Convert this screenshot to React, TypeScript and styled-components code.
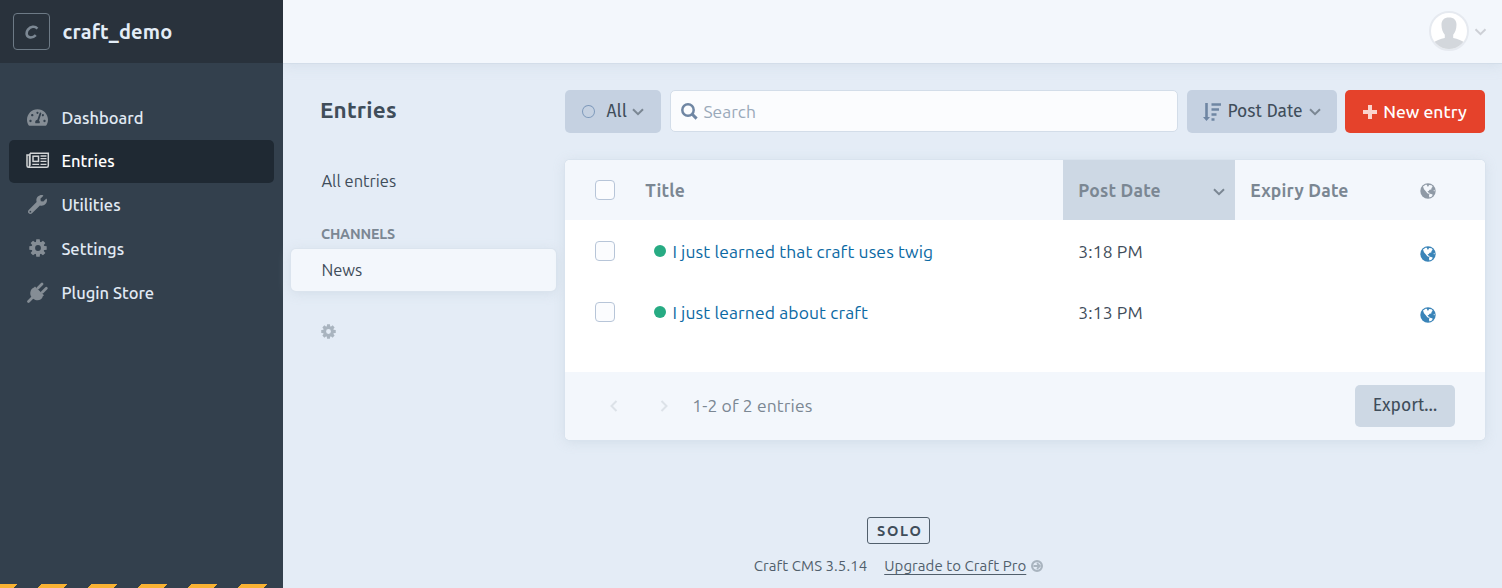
import React from "react";
import styled, { createGlobalStyle, css } from "styled-components";
import { FaTachometerAlt, FaWrench } from "react-icons/fa";

const Global = createGlobalStyle`
  *, *::before, *::after { box-sizing: border-box; }
  body {
    margin: 0;
    background: #e4ecf6;
    color: #3f4d5a;
    font-family: Ubuntu, "Noto Sans", sans-serif;
    font-size: 16.5px;
  }
  svg { display: block; flex: none; }
`;

const Page = styled.div`
  display: flex;
  height: 588px;
  overflow: hidden;
`;

/* ---------- global sidebar ---------- */

const Sidebar = styled.aside`
  display: flex;
  flex-direction: column;
  flex: none;
  width: 283px;
  background: #33404d;
`;

const SystemInfo = styled.div`
  display: flex;
  align-items: center;
  height: 63px;
  padding-left: 13px;
  gap: 12.5px;
  background: #29323c;
`;

const SiteIcon = styled.div`
  display: grid;
  place-items: center;
  width: 37px;
  height: 37px;
  border: 1px solid #6d7a86;
  border-radius: 4px;
`;

const SystemName = styled.h2`
  margin: 0;
  font-size: 20px;
  line-height: 28px;
  font-weight: 600;
  letter-spacing: 0.15px;
  color: #e3edf7;
`;

const Nav = styled.nav`
  display: flex;
  flex-direction: column;
  flex: 1;
  padding: 33px 9px 0;
`;

const NavItem = styled.a<{ $active?: boolean }>`
  display: flex;
  align-items: center;
  height: ${(p) => (p.$active ? 43 : 44)}px;
  padding-left: 16px;
  gap: 11.4px;
  border-radius: 5px;
  font-weight: 500;
  letter-spacing: 0.02px;
  color: ${(p) => (p.$active ? "#fff" : "#e1eaf4")};
  ${(p) =>
    p.$active &&
    css`
      padding-bottom: 1px;
      background: #1f2933;
    `}
`;

const NavIcon = styled.span<{ $active?: boolean }>`
  display: grid;
  place-items: center;
  width: 25px;
  padding-bottom: 2px;
  color: ${(p) => (p.$active ? "#d2d4d6" : "#858d95")};
`;

const DevModeStripe = styled.div`
  height: 4px;
  background: repeating-linear-gradient(
    135deg,
    #f9b233 0 12.2px,
    #33404d 12.2px 29px,
    #f9b233 29px 35.355px
  );
`;

/* ---------- main area ---------- */

const Main = styled.div`
  display: flex;
  flex-direction: column;
  flex: 1;
  min-width: 0;
`;

const TopBar = styled.header`
  display: flex;
  align-items: center;
  justify-content: flex-end;
  height: 63px;
  flex: none;
  padding: 0 15px 0 0;
  gap: 5px;
  background: #f3f7fc;
  color: #cdd0d6;
  box-shadow: 0 0 0 1px rgba(205, 216, 228, 0.6), 0 2px 12px rgba(205, 216, 228, 0.7);
  clip-path: inset(0 0 -40px 0);
`;

const Avatar = styled.div`
  width: 40px;
  height: 40px;
  margin-bottom: 1px;
  border: 2px solid #e6eaf0;
  border-radius: 50%;
  background: #fff;
  overflow: hidden;
`;

const Columns = styled.div`
  display: flex;
  flex: 1;
`;

const Sources = styled.div`
  display: flex;
  flex-direction: column;
  flex: none;
  width: 282px;
  padding: 27px 9px 0 8px;
`;

const PageTitle = styled.h1`
  margin: 0 0 30px 29px;
  font-size: 22.5px;
  line-height: 40px;
  font-weight: 700;
  letter-spacing: 0.2px;
  color: #3f4d5a;
`;

const Source = styled.a<{ $selected?: boolean }>`
  display: flex;
  align-items: center;
  height: 42px;
  padding-left: 30.4px;
  border-radius: 5px;
  color: #3f4d5a;
  ${(p) =>
    p.$selected &&
    css`
      background: #f3f7fc;
      box-shadow: 0 0 0 1px #dbe4ee, 0 2px 12px rgba(205, 216, 228, 0.8);
    `}
`;

const SourceHeading = styled.div`
  margin: 22px 0 5px 30px;
  font-size: 14.3px;
  line-height: 20px;
  font-weight: 700;
  letter-spacing: -0.2px;
  color: #7b8793;
`;

const SourceSettings = styled.div`
  margin: 32.500px 0 0 30px;
  color: #a9b4bf;
`;

const Content = styled.section`
  display: flex;
  flex-direction: column;
  flex: 1;
  min-width: 0;
  padding: 27px 17px 0 0;
`;

const Toolbar = styled.div`
  display: flex;
  align-items: flex-start;
  margin-bottom: 27px;
`;

const Button = styled.button<{ $kind?: "submit" | "footer"; $width: number }>`
  display: flex;
  align-items: center;
  justify-content: center;
  width: ${(p) => p.$width}px;
  height: 43px;
  padding: 0;
  border: 0;
  border-radius: 5px;
  background: #c5d1e1;
  color: #3f4d5a;
  font-family: "Fira Sans", "Noto Sans", sans-serif;
  font-size: 17.5px;
  font-weight: 400;
  ${(p) =>
    p.$kind === "submit" &&
    css`
      background: #e5422b;
      color: #fff;
      font-family: Ubuntu, "Noto Sans", sans-serif;
      font-weight: 500;
    `}
  ${(p) =>
    p.$kind === "footer" &&
    css`
      height: 42px;
      padding-bottom: 2px;
      background: #cdd8e4;
    `}
`;

const ButtonLabel = styled.span<{ $before: number; $after?: number; $raise?: number }>`
  margin: 0 ${(p) => p.$after ?? 0}px 0 ${(p) => p.$before}px;
  padding-bottom: ${(p) => p.$raise ?? 0}px;
`;

const Muted = styled.span`
  padding-top: 1px;
  color: #7b8793;
`;

const StatusRing = styled.span`
  width: 12.5px;
  height: 13px;
  border: 1px solid #7f9abb;
  border-radius: 50%;
`;

const SearchBox = styled.div`
  display: flex;
  align-items: center;
  flex: 1;
  height: 42px;
  margin: 0 9px;
  padding-left: 10px;
  gap: 5.400px;
  border: 1px solid #d3dde9;
  border-radius: 5px;
  background: #fbfcfe;
  color: #9aa9ba;
  font-size: 17.5px;
`;

const Spacer = styled.span`
  width: 8px;
`;

/* ---------- element index ---------- */

const Panel = styled.div`
  display: flex;
  flex-direction: column;
  height: 280px;
  border-radius: 5px;
  overflow: hidden;
  background: #fff;
  font-size: 17.5px;
  letter-spacing: 0.12px;
`;

const PanelShadow = styled.div`
  border-radius: 5px;
  box-shadow: 0 0 0 1px #d9e3ee, 0 2px 12px rgba(205, 216, 228, 0.8);
`;

const gridColumns = css`
  display: grid;
  grid-template-columns: 65px 433px 172px 170px 80px;
  align-items: center;
`;

const HeadRow = styled.div`
  ${gridColumns}
  height: 60px;
  background: #f3f7fc;
  font-weight: 700;
  letter-spacing: 0.18px;
  color: #7b8793;
`;

const Row = styled.div`
  ${gridColumns}
  height: 61px;
  padding-top: 1px;
`;

const Cell = styled.div<{ $sorted?: boolean }>`
  display: flex;
  align-items: center;
  height: 100%;
  padding-left: 15.300px;
  ${(p) =>
    p.$sorted &&
    css`
      justify-content: space-between;
      padding-right: 10px;
      background: #cdd8e4;
    `}
`;

const SortMark = styled.span`
  padding-top: 4px;
`;

const CheckCell = styled.div`
  padding-left: 30px;
`;

const Checkbox = styled.div`
  width: 20px;
  height: 20px;
  border: 1px solid #b7c5d8;
  border-radius: 4px;
  background: #fbfcfe;
`;

const StatusDot = styled.span`
  width: 12px;
  height: 12px;
  margin: 0 6.400px 0 8.700px;
  border-radius: 50%;
  background: #27ab83;
`;

const EntryLink = styled.a`
  color: #0b69a3;
`;

const GlobeCell = styled.div<{ $head?: boolean }>`
  padding: ${(p) => (p.$head ? 2 : 5)}px 0 0 15px;
  color: ${(p) => (p.$head ? "#8f9aa6" : "#3a84b8")};
`;

const PanelFooter = styled.div`
  display: flex;
  align-items: center;
  height: 68px;
  margin-top: auto;
  padding: 0 30px 0 45px;
  background: #f3f7fc;
  color: #7b8793;
`;

const Pager = styled.div`
  display: flex;
  gap: 42px;
  margin-right: 24.300px;
  color: #dce2e8;
`;

const Count = styled.span`
  flex: 1;
  padding-bottom: 1px;
`;

/* ---------- footer ---------- */

const AppFooter = styled.footer`
  display: flex;
  flex-direction: column;
  align-items: center;
  width: 667px;
  margin-top: 77px;
  font-size: 15px;
  letter-spacing: 0.07px;
  color: #515f6c;
`;

const Edition = styled.div`
  width: 63px;
  height: 27px;
  border: 1px solid #515f6c;
  border-radius: 3px;
  padding-left: 9px;
  font-size: 14.5px;
  line-height: 26px;
  font-weight: 700;
  letter-spacing: 1.7px;
  color: #3f4d5a;
`;

const Version = styled.div`
  display: flex;
  align-items: center;
  margin-top: 12px;
  line-height: 20px;
`;

const Upgrade = styled.a`
  margin: 0 5px 0 17px;
  text-decoration: underline;
  text-decoration-thickness: 1px;
  text-underline-offset: 3px;
`;

/* ---------- icons ---------- */

const CraftMark = () => (
  <svg width="14" height="14" viewBox="0 0 14 14" fill="none" stroke="#7c8894" strokeWidth="2.6">
    <path d="M12.4 3.6C9.8.6 5.4 1.400 3 4.600.6 8 1.500 12 5 12.400c2.200.300 4.300-.700 5.800-2.200" />
  </svg>
);

const Cog = ({ size }: { size: number }) => (
  <svg width={size} height={size} viewBox="0 0 18 18" fill="currentColor">
    {[0, 45, 90, 135].map((a) => (
      <g key={a} transform={`rotate(${a} 9 9)`}>
        <path d="M7.300.3h3.400l.5 4H6.800zM7.300 17.700h3.400l.5-4H6.800z" />
      </g>
    ))}
    <circle cx="9" cy="9" r="4.700" fill="none" stroke="currentColor" strokeWidth="3.600" />
  </svg>
);

const Newspaper = () => (
  <svg width="24" height="17" viewBox="0 0 24 17" fill="none" stroke="currentColor">
    <path strokeWidth="1.500" d="M4 1.250h18.300v12.500q0 1.500-1.500 1.500H2.500Q1 15.250 1 13.700V3h2.500v10.500q0 1.500-1.200 1.700M4 1.250v12.500" />
    <rect x="7" y="4.200" width="5.500" height="5.200" strokeWidth="1.500" />
    <path strokeWidth="1.300" d="M14.500 4h6M14.500 6.700h6M14.500 9.400h6M6.300 12.300h6.800M14.500 12.300h6" />
  </svg>
);

const Plug = () => (
  <svg width="21" height="21" viewBox="0 0 21 21" fill="none" stroke="currentColor" strokeLinecap="round">
    <path d="M1.500 19.500 5 16M11 6l4-4M15.300 10.300l4-4" strokeWidth="2.700" />
    <path
      d="M8 4.400 17 13.300 15.800 14.300C15.300 17 12.500 18.600 9.500 18.200 8 18 6.800 17.300 5.800 16.500 4 15 3 12.700 3.300 10.500 3.600 8 5 6.300 7 5.500z"
      fill="currentColor"
      stroke="none"
    />
  </svg>
);

const Chevron = ({ dir = "down", w = 12 }: { dir?: "down" | "left" | "right"; w?: number }) => {
  const vertical = dir !== "down";
  const d = {
    down: "M1 1.200 6 6.200l5-5",
    left: "M6.500 1 1.500 6l5 5",
    right: "M1.500 1l5 5-5 5",
  }[dir];
  return (
    <svg
      width={vertical ? 8 : w}
      height={vertical ? 12 : 8}
      viewBox={vertical ? "0 0 8 12" : "0 0 12 8"}
      fill="none"
      stroke="currentColor"
      strokeWidth="2"
    >
      <path d={d} />
    </svg>
  );
};

const Silhouette = () => (
  <svg width="36" height="36" viewBox="0 0 36 36" fill="#d3d7dc">
    <path d="M18 4.500c5 0 7.500 2.700 7.500 7.200 0 4.300-1.300 7.500-3.300 10v3.300c4.300 1 9 2.500 12.800 5.500V36H1v-5.500c3.800-3 8.500-4.500 12.800-5.500v-3.300c-2-2.500-3.300-5.700-3.300-10 0-4.500 2.500-7.200 7.500-7.200z" />
  </svg>
);

const Magnifier = () => (
  <svg width="17" height="17" viewBox="0 0 17 17" fill="none" stroke="#6f86a3">
    <circle cx="7" cy="7" r="5.700" strokeWidth="2.500" />
    <path d="M11.200 11.200l4.400 4.400" strokeWidth="3" />
  </svg>
);

const SortIcon = () => (
  <svg width="18" height="18" viewBox="0 0 18 18" fill="none" stroke="#6f86a3" strokeWidth="2.300">
    <path d="M3.500 0v16" strokeWidth="2.600" />
    <path d="M0 14h7l-3.500 4z" fill="#6f86a3" stroke="none" />
    <path d="M8.500 1.500H18M8.500 6.500H16M8.500 11.500h5M8.500 16.500h3" />
  </svg>
);

const Plus = () => (
  <svg width="14" height="14" viewBox="0 0 14 14" stroke="#fbd3cd" strokeWidth="4">
    <path d="M7 0v14M0 7h14" />
  </svg>
);

const Globe = ({ land }: { land: string }) => (
  <svg width="16" height="16" viewBox="0 0 16 16">
    <circle cx="8" cy="8" r="7.700" fill="currentColor" />
    <path
      fill={land}
      d="M3 3.600 6 1.600l1.300.6-.4 1 1.500.3.600-1.400 2.500.2 1.200 1.400-1.200 1.300-.2 1.500-1.700.3-.9 1.300-1.200.2.800 1.100 1.500.7-.5.9-2-.8-1.500-2L4 6.300z"
    />
    <path fill={land} d="M9.200 11.200l1.600-.5 2 1-1 1.700-2.300 1.200-.5-1.600zM13.300 8l1.200-1.300.2 1.600z" />
  </svg>
);

const GoArrow = () => (
  <svg width="12" height="12" viewBox="0 0 12 12" fill="none" stroke="#a9b4bf">
    <circle cx="6" cy="6" r="4.900" strokeWidth="2.200" />
    <path d="M2.500 6h6M6 3.200 8.800 6 6 8.800" strokeWidth="1.800" />
  </svg>
);

const entries = [
  { title: "I just learned that craft uses twig", time: "3:18 PM" },
  { title: "I just learned about craft", time: "3:13 PM" },
];

const navigation = [
  { label: "Dashboard", icon: <FaTachometerAlt size={21} /> },
  { label: "Entries", icon: <Newspaper />, active: true },
  { label: "Utilities", icon: <FaWrench size={19} /> },
  { label: "Settings", icon: <Cog size={18} /> },
  { label: "Plugin Store", icon: <Plug /> },
];

export default function App() {
  return (
    <Page>
      <Global />
      <Sidebar>
        <SystemInfo>
          <SiteIcon>
            <CraftMark />
          </SiteIcon>
          <SystemName>craft_demo</SystemName>
        </SystemInfo>
        <Nav>
          {navigation.map((n) => (
            <NavItem key={n.label} $active={n.active}>
              <NavIcon $active={n.active}>{n.icon}</NavIcon>
              {n.label}
            </NavItem>
          ))}
        </Nav>
        <DevModeStripe />
      </Sidebar>

      <Main>
        <TopBar>
          <Avatar>
            <Silhouette />
          </Avatar>
          <Chevron w={13} />
        </TopBar>
        <Columns>
          <Sources>
            <PageTitle>Entries</PageTitle>
            <Source>All entries</Source>
            <SourceHeading>CHANNELS</SourceHeading>
            <Source $selected>News</Source>
            <SourceSettings>
              <Cog size={15} />
            </SourceSettings>
          </Sources>

          <Content>
            <Toolbar>
              <Button $width={96}>
                <StatusRing />
                <ButtonLabel $before={12} $after={5} $raise={1}>All</ButtonLabel>
                <Muted>
                  <Chevron />
                </Muted>
              </Button>
              <SearchBox>
                <Magnifier />
                Search
              </SearchBox>
              <Button $width={150}>
                <SortIcon />
                <ButtonLabel $before={6} $after={6} $raise={1}>Post Date</ButtonLabel>
                <Muted>
                  <Chevron />
                </Muted>
              </Button>
              <Spacer />
              <Button $kind="submit" $width={140}>
                <Plus />
                <ButtonLabel $before={6}>New entry</ButtonLabel>
              </Button>
            </Toolbar>

            <PanelShadow>
              <Panel>
                <HeadRow>
                  <CheckCell>
                    <Checkbox />
                  </CheckCell>
                  <Cell>Title</Cell>
                  <Cell $sorted>
                    Post Date
                    <SortMark>
                      <Chevron />
                    </SortMark>
                  </Cell>
                  <Cell>Expiry Date</Cell>
                  <GlobeCell $head>
                    <Globe land="#f3f7fc" />
                  </GlobeCell>
                </HeadRow>
                {entries.map((e) => (
                  <Row key={e.title}>
                    <CheckCell>
                      <Checkbox />
                    </CheckCell>
                    <Cell>
                      <StatusDot />
                      <EntryLink>{e.title}</EntryLink>
                    </Cell>
                    <Cell>{e.time}</Cell>
                    <Cell />
                    <GlobeCell>
                      <Globe land="#ffffff" />
                    </GlobeCell>
                  </Row>
                ))}
                <PanelFooter>
                  <Pager>
                    <Chevron dir="left" />
                    <Chevron dir="right" />
                  </Pager>
                  <Count>1-2 of 2 entries</Count>
                  <Button $kind="footer" $width={100}>Export…</Button>
                </PanelFooter>
              </Panel>
            </PanelShadow>

            <AppFooter>
              <Edition>SOLO</Edition>
              <Version>
                Craft CMS 3.5.14
                <Upgrade>Upgrade to Craft Pro</Upgrade>
                <GoArrow />
              </Version>
            </AppFooter>
          </Content>
        </Columns>
      </Main>
    </Page>
  );
}
